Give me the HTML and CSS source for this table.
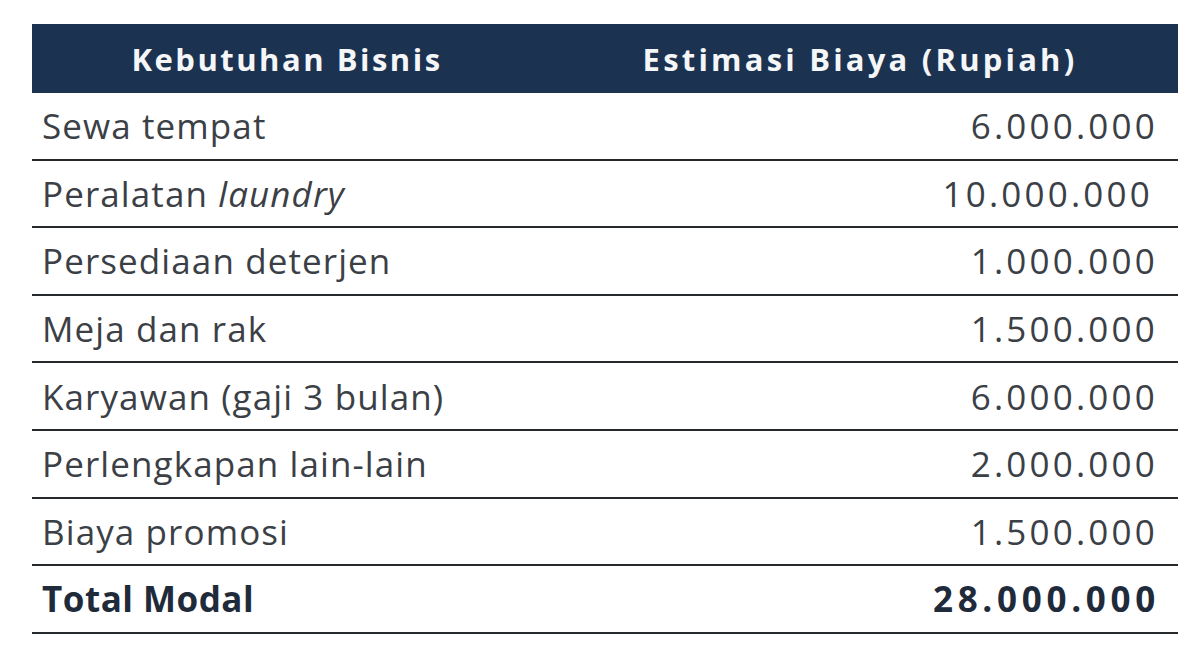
FILE: index.html
```html
<!DOCTYPE html>
<html>
<head>
<meta charset="utf-8">
<link rel="stylesheet" href="styles.css">
</head>
<body>
<table class="cost">
  <thead>
    <tr><th class="c1">Kebutuhan Bisnis</th><th class="c2">Estimasi Biaya (Rupiah)</th></tr>
  </thead>
  <tbody>
    <tr><td>Sewa tempat</td><td class="num">6.000.000</td></tr>
    <tr><td>Peralatan <em>laundry</em></td><td class="num shift">10.000.000</td></tr>
    <tr><td>Persediaan deterjen</td><td class="num">1.000.000</td></tr>
    <tr><td>Meja dan rak</td><td class="num">1.500.000</td></tr>
    <tr><td>Karyawan (gaji 3 bulan)</td><td class="num">6.000.000</td></tr>
    <tr><td>Perlengkapan lain-lain</td><td class="num">2.000.000</td></tr>
    <tr><td>Biaya promosi</td><td class="num">1.500.000</td></tr>
    <tr class="total"><td>Total Modal</td><td class="num">28.000.000</td></tr>
  </tbody>
</table>
</body>
</html>
```
FILE: styles.css
```css
html, body {
  margin: 0;
  padding: 0;
  background: #ffffff;
}
body {
  padding: 24px 22px 0 32px;
  font-family: "Open Sans", "Liberation Sans", sans-serif;
}
.cost {
  width: 1146px;
  border-collapse: collapse;
  table-layout: fixed;
}
.cost th {
  background: #1b3250;
  color: #f4f6f8;
  font-weight: 700;
  font-size: 31px;
  height: 69px;
  padding: 0;
  text-align: center;
  letter-spacing: 2.5px;
}
.cost th.c1 { width: 510px; }
.cost th.c2 { letter-spacing: 3.2px; }
.cost td {
  height: 65.6px;
  padding: 0 20px 0 10px;
  font-size: 35px;
  letter-spacing: 1.1px;
  color: #3b4046;
  border-bottom: 2px solid #26292c;
  vertical-align: middle;
}
.cost td em { font-style: italic; }
.cost td.num {
  text-align: right;
  letter-spacing: 3.2px;
}
.cost td.shift { padding-right: 25px; }
.cost tr.total td {
  font-weight: 700;
  color: #1f2b3a;
  letter-spacing: 0.5px;
}
.cost tr.total td.num { letter-spacing: 4.7px; padding-right: 18px; }
```
